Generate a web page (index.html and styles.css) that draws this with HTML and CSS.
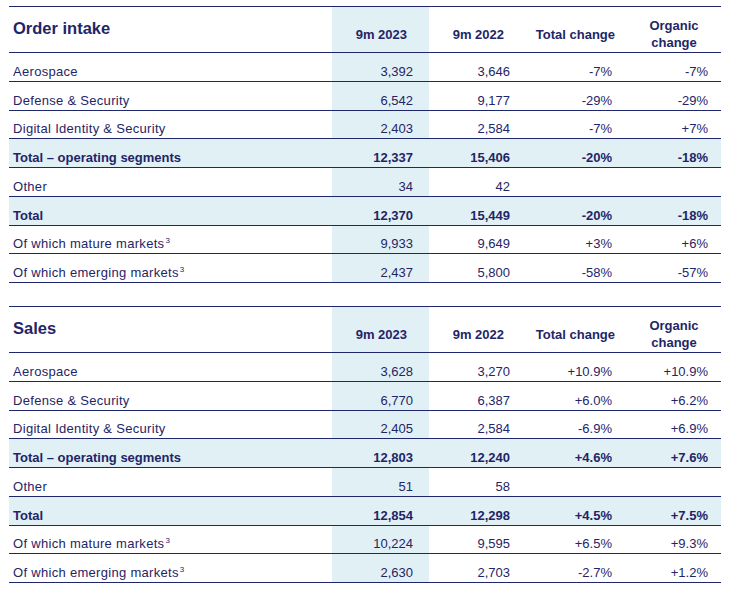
FILE: index.html
```html
<!DOCTYPE html>
<html lang="en">
<head>
<meta charset="utf-8">
<title>Order intake and Sales</title>
<link rel="stylesheet" href="styles.css">
</head>
<body>
<main class="page">
  <section class="tbl">
    <div class="row head">
      <div class="c lbl title">Order intake</div>
      <div class="c hl h2">9m 2023</div>
      <div class="c h3">9m 2022</div>
      <div class="c h4">Total change</div>
      <div class="c h5">Organic<br>change</div>
    </div>
    <div class="row">
      <div class="c lbl">Aerospace</div>
      <div class="c hl n2">3,392</div>
      <div class="c n3">3,646</div>
      <div class="c n4">-7%</div>
      <div class="c n5">-7%</div>
    </div>
    <div class="row">
      <div class="c lbl">Defense &amp; Security</div>
      <div class="c hl n2">6,542</div>
      <div class="c n3">9,177</div>
      <div class="c n4">-29%</div>
      <div class="c n5">-29%</div>
    </div>
    <div class="row">
      <div class="c lbl">Digital Identity &amp; Security</div>
      <div class="c hl n2">2,403</div>
      <div class="c n3">2,584</div>
      <div class="c n4">-7%</div>
      <div class="c n5">+7%</div>
    </div>
    <div class="row total">
      <div class="c lbl">Total – operating segments</div>
      <div class="c hl n2">12,337</div>
      <div class="c n3">15,406</div>
      <div class="c n4">-20%</div>
      <div class="c n5">-18%</div>
    </div>
    <div class="row">
      <div class="c lbl">Other</div>
      <div class="c hl n2">34</div>
      <div class="c n3">42</div>
      <div class="c n4"></div>
      <div class="c n5"></div>
    </div>
    <div class="row total">
      <div class="c lbl">Total</div>
      <div class="c hl n2">12,370</div>
      <div class="c n3">15,449</div>
      <div class="c n4">-20%</div>
      <div class="c n5">-18%</div>
    </div>
    <div class="row">
      <div class="c lbl">Of which mature markets<span class="sup">3</span></div>
      <div class="c hl n2">9,933</div>
      <div class="c n3">9,649</div>
      <div class="c n4">+3%</div>
      <div class="c n5">+6%</div>
    </div>
    <div class="row">
      <div class="c lbl">Of which emerging markets<span class="sup">3</span></div>
      <div class="c hl n2">2,437</div>
      <div class="c n3">5,800</div>
      <div class="c n4">-58%</div>
      <div class="c n5">-57%</div>
    </div>
  </section>

  <section class="tbl second">
    <div class="row head">
      <div class="c lbl title">Sales</div>
      <div class="c hl h2">9m 2023</div>
      <div class="c h3">9m 2022</div>
      <div class="c h4">Total change</div>
      <div class="c h5">Organic<br>change</div>
    </div>
    <div class="row">
      <div class="c lbl">Aerospace</div>
      <div class="c hl n2">3,628</div>
      <div class="c n3">3,270</div>
      <div class="c n4">+10.9%</div>
      <div class="c n5">+10.9%</div>
    </div>
    <div class="row">
      <div class="c lbl">Defense &amp; Security</div>
      <div class="c hl n2">6,770</div>
      <div class="c n3">6,387</div>
      <div class="c n4">+6.0%</div>
      <div class="c n5">+6.2%</div>
    </div>
    <div class="row">
      <div class="c lbl">Digital Identity &amp; Security</div>
      <div class="c hl n2">2,405</div>
      <div class="c n3">2,584</div>
      <div class="c n4">-6.9%</div>
      <div class="c n5">+6.9%</div>
    </div>
    <div class="row total">
      <div class="c lbl">Total – operating segments</div>
      <div class="c hl n2">12,803</div>
      <div class="c n3">12,240</div>
      <div class="c n4">+4.6%</div>
      <div class="c n5">+7.6%</div>
    </div>
    <div class="row">
      <div class="c lbl">Other</div>
      <div class="c hl n2">51</div>
      <div class="c n3">58</div>
      <div class="c n4"></div>
      <div class="c n5"></div>
    </div>
    <div class="row total">
      <div class="c lbl">Total</div>
      <div class="c hl n2">12,854</div>
      <div class="c n3">12,298</div>
      <div class="c n4">+4.5%</div>
      <div class="c n5">+7.5%</div>
    </div>
    <div class="row">
      <div class="c lbl">Of which mature markets<span class="sup">3</span></div>
      <div class="c hl n2">10,224</div>
      <div class="c n3">9,595</div>
      <div class="c n4">+6.5%</div>
      <div class="c n5">+9.3%</div>
    </div>
    <div class="row">
      <div class="c lbl">Of which emerging markets<span class="sup">3</span></div>
      <div class="c hl n2">2,630</div>
      <div class="c n3">2,703</div>
      <div class="c n4">-2.7%</div>
      <div class="c n5">+1.2%</div>
    </div>
  </section>
</main>
</body>
</html>
```

FILE: styles.css
```css
* {
  box-sizing: border-box;
}

html, body {
  margin: 0;
  padding: 0;
  background: #ffffff;
}

body {
  font-family: "Liberation Sans", Arial, sans-serif;
  font-size: 13px;
  color: #1f2566;
}

.page {
  padding: 6px 0 0 9px;
}

.tbl {
  width: 712px;
  border-top: 1px solid #1f276c;
}

.tbl.second {
  margin-top: 23px;
}

.row {
  display: grid;
  grid-template-columns: 323px 97px 97px 99px 96px;
  height: 28.75px;
  border-bottom: 1px solid #1f276c;
}

.row.head {
  height: 46px;
  font-weight: 700;
}

.row.total {
  background: #e1f0f5;
  font-weight: 700;
}

.c {
  display: flex;
  align-items: center;
  justify-content: flex-end;
  padding-top: 9px;
  line-height: 17px;
  white-space: nowrap;
}

.hl {
  background: #e1f0f5;
}

.lbl {
  justify-content: flex-start;
  padding-left: 4px;
  letter-spacing: 0.3px;
}

.row.total .lbl,
.title {
  letter-spacing: 0;
}

.title {
  align-items: flex-start;
  padding-top: 11px;
  font-size: 16.5px;
  line-height: 20px;
}

.h2, .h3 {
  padding-right: 22px;
}

.h4 {
  padding-right: 10px;
}

.h5 {
  justify-content: center;
  text-align: center;
  padding-left: 2px;
  line-height: 17.5px;
}

.n2, .n3 {
  padding-right: 16px;
}

.n4, .n5 {
  padding-right: 13px;
}

.sup {
  font-size: 8px;
  line-height: 1;
  position: relative;
  top: -3px;
  margin-left: 1px;
}
```
